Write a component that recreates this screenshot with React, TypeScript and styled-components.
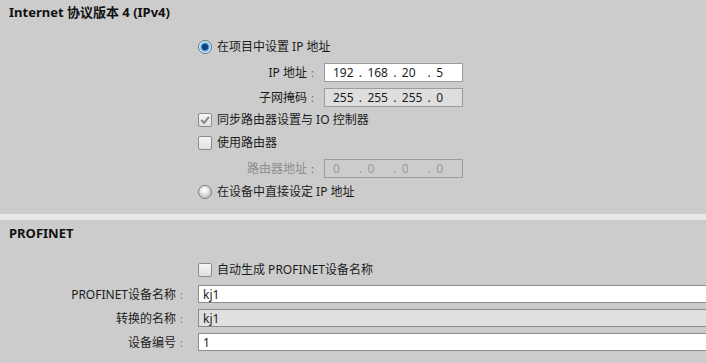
import React from "react";
import styled, { createGlobalStyle, css } from "styled-components";

const GlobalStyle = createGlobalStyle`
  html, body {
    margin: 0;
    padding: 0;
    background: #cccccc;
    overflow: hidden;
  }
  body {
    font-family: "Noto Sans", "Noto Sans CJK SC", sans-serif;
    font-size: 12px;
    color: #1c1c1c;
  }
`;

const Page = styled.div`
  width: 706px;
  height: 363px;
  display: flex;
  flex-direction: column;
  overflow: hidden;
`;

const Section = styled.section<{ grow?: boolean }>`
  display: flex;
  flex-direction: column;
  ${(p) =>
    p.grow &&
    css`
      flex: 1;
    `}
`;

const Separator = styled.div`
  height: 6px;
  margin-top: 11px;
  background: #e8e8e8;
  flex-shrink: 0;
`;

const Title = styled.h2<{ h: number }>`
  margin: 0;
  padding-left: 9px;
  height: ${(p) => p.h}px;
  line-height: ${(p) => p.h}px;
  font-size: 13px;
  font-weight: 700;
  color: #111;
`;

const Options = styled.div<{ top: number; left: number }>`
  display: flex;
  flex-direction: column;
  padding-top: ${(p) => p.top}px;
  padding-left: ${(p) => p.left}px;
`;

const Row = styled.div<{ h: number; indent?: number }>`
  height: ${(p) => p.h}px;
  padding-left: ${(p) => p.indent ?? 0}px;
  display: flex;
  align-items: center;
  white-space: nowrap;
`;

const OptionText = styled.span`
  margin-left: 5px;
  line-height: 14px;
`;

const Radio = styled.span<{ on?: boolean }>`
  width: 14px;
  height: 14px;
  border-radius: 50%;
  box-sizing: border-box;
  flex-shrink: 0;
  border: 1px solid ${(p) => (p.on ? "#5e7386" : "#7d7d7d")};
  background: ${(p) =>
    p.on
      ? "radial-gradient(circle at 50% 50%, #143f78 0 2.8px, #3e8fd6 3.4px, #8ccaf2 4.6px, #e8f2fa 5.6px)"
      : "radial-gradient(circle at 45% 35%, #ffffff 0, #eeeeee 3px, #c9c9c9 6.5px)"};
`;

const Box = styled.span`
  width: 14px;
  height: 14px;
  box-sizing: border-box;
  flex-shrink: 0;
  border: 1px solid #8b8b8b;
  border-radius: 2px;
  background: linear-gradient(#f6f6f6, #dedede);
  display: flex;
  align-items: center;
  justify-content: center;
`;

const Check = ({ on }: { on?: boolean }) => (
  <Box>
    {on && (
      <svg width="12" height="12" viewBox="0 0 12 12">
        <path d="M2.2 6 L5 8.8 L10 2.8" fill="none" stroke="#858585" strokeWidth="1.9" />
      </svg>
    )}
  </Box>
);

const Label = styled.span<{ w: number; dim?: boolean }>`
  width: ${(p) => p.w}px;
  display: flex;
  justify-content: flex-end;
  align-items: center;
  color: ${(p) => (p.dim ? "#8e8e8e" : "#1c1c1c")};
  flex-shrink: 0;
`;

const Colon = styled.span<{ w: number }>`
  width: ${(p) => p.w}px;
  padding-left: 4px;
  box-sizing: border-box;
  color: #6a6a6a;
  font-size: 11px;
`;

type Tone = "white" | "grey" | "off";

const IpBox = styled.div<{ tone: Tone }>`
  width: 139px;
  height: 19px;
  box-sizing: border-box;
  border: 1px solid #9c9c9c;
  padding-left: 8px;
  display: flex;
  align-items: center;
  background: ${(p) => (p.tone === "white" ? "#ffffff" : p.tone === "grey" ? "#dedede" : "#cccccc")};
  color: ${(p) => (p.tone === "off" ? "#9a9a9a" : "#1c1c1c")};
`;

const Octet = styled.span`
  width: 27px;
`;

const Dot = styled.span`
  width: 9px;
`;

const IpField = ({ parts, tone }: { parts: string[]; tone: Tone }) => (
  <IpBox tone={tone}>
    {parts.map((p, i) => (
      <React.Fragment key={i}>
        <Octet>{p}</Octet>
        {i < 3 && <Dot>.</Dot>}
      </React.Fragment>
    ))}
  </IpBox>
);

const WideField = styled.div<{ grey?: boolean }>`
  flex: 1;
  height: 18px;
  box-sizing: border-box;
  border: 1px solid #8c8c8c;
  border-right: none;
  padding-left: 4px;
  display: flex;
  align-items: center;
  background: ${(p) => (p.grey ? "#e0e0e0" : "#ffffff")};
  color: #1c1c1c;
`;

export default function App() {
  return (
    <Page>
      <GlobalStyle />
      <Section>
        <Title h={24}>Internet 协议版本 4 (IPv4)</Title>
        <Options top={11} left={198}>
          <Row h={24}>
            <Radio on />
            <OptionText>在项目中设置 IP 地址</OptionText>
          </Row>
          <Row h={26}>
            <Label w={109}>IP 地址</Label>
            <Colon w={17}>:</Colon>
            <IpField tone="white" parts={["192", "168", "20", "5"]} />
          </Row>
          <Row h={24}>
            <Label w={109}>子网掩码</Label>
            <Colon w={17}>:</Colon>
            <IpField tone="grey" parts={["255", "255", "255", "0"]} />
          </Row>
          <Row h={22}>
            <Check on />
            <OptionText>同步路由器设置与 IO 控制器</OptionText>
          </Row>
          <Row h={24}>
            <Check />
            <OptionText>使用路由器</OptionText>
          </Row>
          <Row h={26}>
            <Label w={109} dim>
              路由器地址
            </Label>
            <Colon w={17}>:</Colon>
            <IpField tone="off" parts={["0", "0", "0", "0"]} />
          </Row>
          <Row h={22}>
            <Radio />
            <OptionText>在设备中直接设定 IP 地址</OptionText>
          </Row>
        </Options>
      </Section>
      <Separator />
      <Section grow>
        <Title h={26}>PROFINET</Title>
        <Options top={11} left={0}>
          <Row h={25} indent={198}>
            <Check />
            <OptionText>自动生成 PROFINET设备名称</OptionText>
          </Row>
          <Row h={24}>
            <Label w={176}>PROFINET设备名称</Label>
            <Colon w={22}>:</Colon>
            <WideField>kj1</WideField>
          </Row>
          <Row h={24}>
            <Label w={176}>转换的名称</Label>
            <Colon w={22}>:</Colon>
            <WideField grey>kj1</WideField>
          </Row>
          <Row h={24}>
            <Label w={176}>设备编号</Label>
            <Colon w={22}>:</Colon>
            <WideField>1</WideField>
          </Row>
        </Options>
      </Section>
    </Page>
  );
}
